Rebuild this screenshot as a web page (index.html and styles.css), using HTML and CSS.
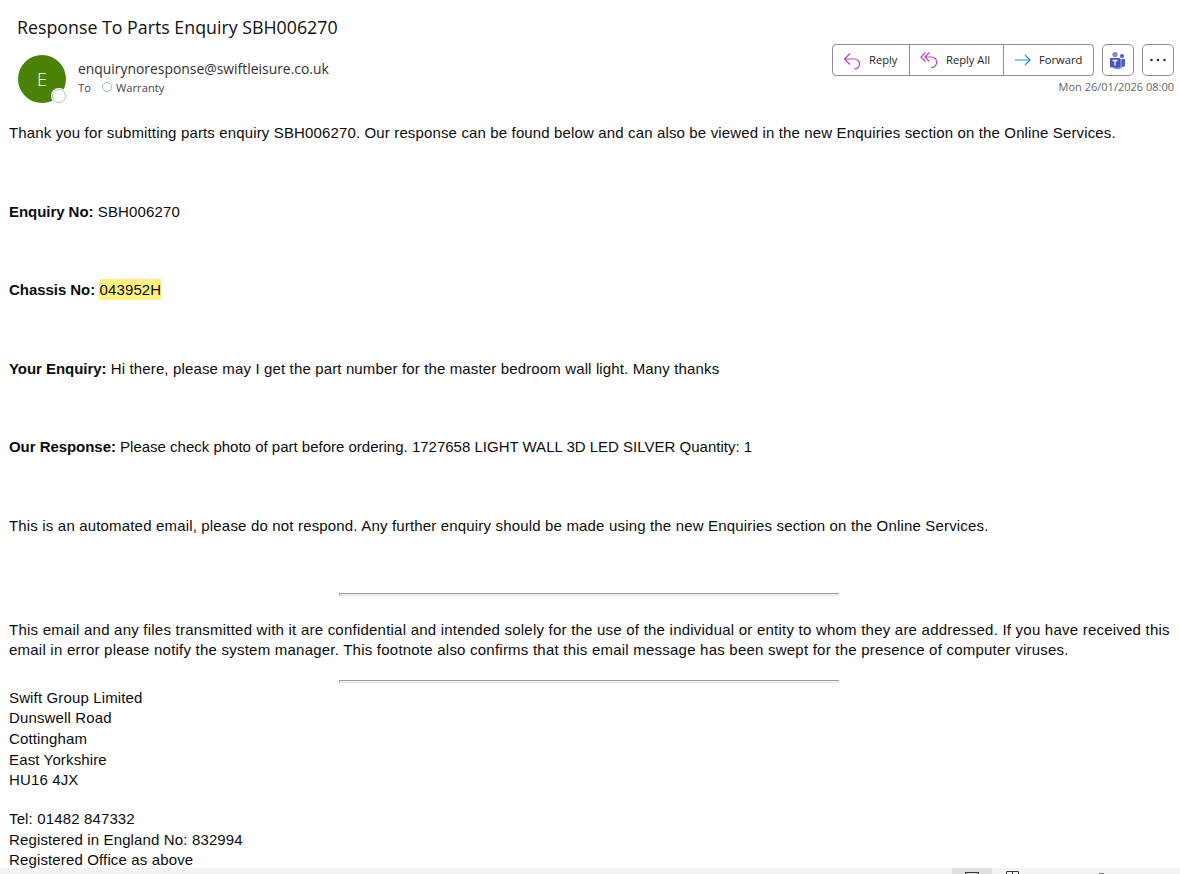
FILE: index.html
```html
<!DOCTYPE html>
<html lang="en">
<head>
<meta charset="utf-8">
<title>Response To Parts Enquiry SBH006270</title>
<link rel="stylesheet" href="styles.css">
</head>
<body>
<div class="window">
  <main class="reading">
    <header class="head">
      <h1 class="subject">Response To Parts Enquiry SBH006270</h1>
      <div class="meta">
        <div class="avatar">E<span class="presence"></span></div>
        <div class="sender">
          <div class="from">enquirynoresponse@swiftleisure.co.uk</div>
          <div class="to"><span class="to-label">To</span><span class="to-dot"></span><span>Warranty</span></div>
        </div>
        <div class="actions">
          <div class="buttons">
            <div class="group">
              <button class="btn btn-reply">
                <svg class="ico" viewBox="0 0 20 20" fill="none" stroke="#b146c2" stroke-width="1.200"><path d="M7 3.500 1.500 9 7 14.500M1.500 9H11.500a5 5 0 0 1 0 10H11"/></svg>
                <span class="label">Reply</span>
              </button>
              <button class="btn btn-all">
                <svg class="ico" viewBox="0 0 20 20" fill="none" stroke="#b146c2" stroke-width="1.200"><path d="M5.500 2.500 1 7 5.500 11.500M9.500 2.500 5 7 9.500 11.500M5 7H11.500a5 5 0 0 1 0 10.500H11"/></svg>
                <span class="label">Reply All</span>
              </button>
              <button class="btn btn-fwd">
                <svg class="ico" viewBox="0 0 20 20" fill="none" stroke="#1f8fd6" stroke-width="1.200"><path d="M1 10H16M11 5l5 5-5 5"/></svg>
                <span class="label">Forward</span>
              </button>
            </div>
            <button class="square" aria-label="Teams">
              <svg class="teams" viewBox="0 0 20 20"><circle cx="14" cy="6" r="2" fill="#5059c9"/><circle cx="7" cy="4.500" r="2.600" fill="#7b83eb"/><path d="M12 9h5v5.500a2.500 2.500 0 0 1-2.500 2.500H12z" fill="#5059c9"/><path d="M5 9h9v6.500a3.500 3.500 0 0 1-3.500 3.500H8.500A3.500 3.500 0 0 1 5 15.500z" fill="#7b83eb"/><rect x="2" y="8" width="10" height="9.500" rx="1" fill="#4b53bc"/><path d="M4.500 10.500h5M7 10.500v5" stroke="#fff" stroke-width="1.300" fill="none"/></svg>
            </button>
            <button class="square" aria-label="More">
              <svg class="more" viewBox="0 0 16 4" fill="#333"><circle cx="1.500" cy="2" r="1.300"/><circle cx="8" cy="2" r="1.300"/><circle cx="14.500" cy="2" r="1.300"/></svg>
            </button>
          </div>
          <div class="date">Mon 26/01/2026 08:00</div>
        </div>
      </div>
    </header>
    <article class="body">
      <p class="para">Thank you for submitting parts enquiry SBH006270. Our response can be found below and can also be viewed in the new Enquiries section on the Online Services.</p>
      <p class="para"><b>Enquiry No:</b> SBH006270</p>
      <p class="para"><b>Chassis No:</b> <mark class="hl">043952H</mark></p>
      <p class="para"><b>Your Enquiry:</b> Hi there, please may I get the part number for the master bedroom wall light. Many thanks</p>
      <p class="para tight"><b>Our Response:</b> Please check photo of part before ordering. 1727658 LIGHT WALL 3D LED SILVER Quantity: 1</p>
      <p class="para last">This is an automated email, please do not respond. Any further enquiry should be made using the new Enquiries section on the Online Services.</p>
      <hr class="rule">
      <p class="note">This email and any files transmitted with it are confidential and intended solely for the use of the individual or entity to whom they are addressed. If you have received this email in error please notify the system manager. This footnote also confirms that this email message has been swept for the presence of computer viruses.</p>
      <hr class="rule">
      <p class="addr first">Swift Group Limited<br>Dunswell Road<br>Cottingham<br>East Yorkshire<br>HU16 4JX</p>
      <p class="addr">Tel: 01482 847332<br>Registered in England No: 832994<br>Registered Office as above</p>
    </article>
  </main>
  <footer class="status">
    <div class="view active"><span class="view-ico"></span></div>
    <div class="view"><span class="view-ico book"></span></div>
    <span class="tick"></span>
  </footer>
</div>
</body>
</html>
```
FILE: styles.css
```css
* { box-sizing: border-box; }
html, body { margin: 0; height: 100%; overflow: hidden; background: #fff; }
.window { height: 874px; display: flex; flex-direction: column; }
.reading { flex: 1; min-height: 0; overflow: hidden; }
.head { font-family: "Open Sans", "Noto Sans", sans-serif; padding: 15px 6px 0 18px; }
.subject { margin: 0 0 0 -1px; font-size: 17.800px; font-weight: 400; line-height: 24px; color: #111; }
.meta { display: flex; margin-top: 4px; height: 80px; }
.avatar { position: relative; width: 48px; height: 48px; margin-top: 12px; border-radius: 50%; background: #498205; color: #fff; font-size: 18px; font-weight: 300; display: flex; align-items: center; justify-content: center; flex: none; }
.presence { position: absolute; right: 0; bottom: 0; width: 14px; height: 14px; border-radius: 50%; background: #fff; border: 1.500px solid #a9c4d6; box-shadow: 0 0 0 1px #fff; }
.sender { margin-left: 12px; padding-top: 15px; color: #333; flex: 1; }
.from { font-size: 13.900px; line-height: 21px; color: #323130; }
.to { display: flex; align-items: center; font-size: 11.200px; line-height: 18px; color: #3f4458; }
.to-label { width: 24px; }
.to-dot { width: 10px; height: 10px; border-radius: 50%; border: 1px solid #9dbbd0; margin-right: 4px; margin-top: -3px; }
.actions { display: flex; flex-direction: column; align-items: flex-end; padding-top: 1px; }
.buttons { display: flex; gap: 8px; }
.group { display: flex; height: 32px; border: 1px solid #8f8f8f; border-radius: 4px; background: #fff; }
.btn { display: flex; align-items: center; height: 100%; padding: 0; border: 0; background: none; font: 11.200px "Open Sans", sans-serif; color: #252525; }
.label { margin-top: -2px; }
.btn-reply { width: 77px; padding-left: 10px; gap: 6px; border-right: 1px solid #8f8f8f; }
.btn-all { width: 94px; padding-left: 10px; gap: 6px; border-right: 1px solid #8f8f8f; }
.btn-fwd { width: 89px; padding-left: 10px; gap: 5px; }
.ico { width: 20px; height: 20px; flex: none; }
.square { width: 32px; height: 32px; padding: 0; border: 1px solid #8f8f8f; border-radius: 5px; background: #fff; display: flex; align-items: center; justify-content: center; }
.teams { width: 20px; height: 20px; }
.more { width: 16px; height: 4px; }
.date { margin-top: 3px; font-size: 11px; line-height: 16px; color: #666; }
.body { font-family: "Liberation Sans", Arial, sans-serif; font-size: 15px; letter-spacing: 0.14px; line-height: 20.600px; color: #0c0c0c; padding: 0 9px; }
.body b { letter-spacing: -0.05px; }
.para { margin: 0 0 58px; }
.para.tight { letter-spacing: 0; }
.para.last { margin-bottom: 56px; letter-spacing: 0.17px; }
.hl { background: #fff17f; color: inherit; padding: 2px 0; }
.rule { width: 500px; height: 3px; margin: 0 0 0 330px; border: 0; border-top: 1px solid #9a9a9a; border-left: 1px solid #9a9a9a; border-bottom: 1px solid #e4e4e4; background: #f6f6f6; }
.note { margin: 24px 0 19px; letter-spacing: 0.225px; }
.addr { margin: 0 0 18.400px; }
.addr.first { margin-top: 5px; }
.status { flex: none; height: 6px; background: #f3f3f3; display: flex; overflow: hidden; padding-left: 952px; position: relative; }
.view { width: 40px; height: 6px; display: flex; justify-content: center; padding-top: 4px; }
.view.active { background: #e0e0e0; }
.view + .view { padding-top: 3px; }
.view-ico { width: 14px; height: 8px; border: 1px solid #333; }
.book { width: 13px; border-radius: 1px; background: linear-gradient(#333, #333) center / 1px 100% no-repeat; }
.tick { position: absolute; left: 1099px; top: 5px; width: 5px; height: 1px; background: #777; }
```
